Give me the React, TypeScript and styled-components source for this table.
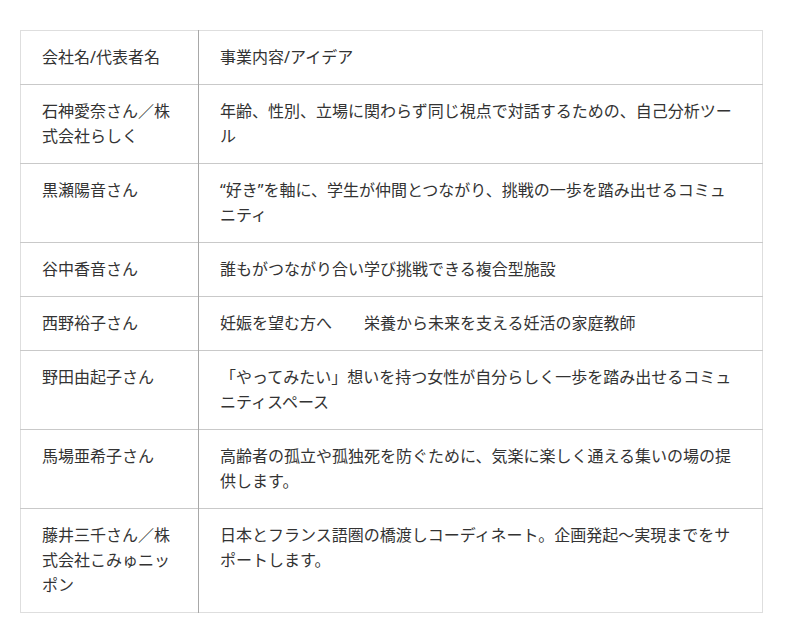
import styled, { createGlobalStyle } from "styled-components";

const GlobalStyle = createGlobalStyle`
  body {
    margin: 0;
    background: #fff;
    font-family: "Noto Sans", "Noto Sans CJK JP", sans-serif;
    color: #333;
  }
`;

const Wrap = styled.div`
  padding: 30px 0 0 20px;
`;

const Table = styled.table`
  width: 743px;
  border-collapse: collapse;
  border: 1px solid #dedede;
  table-layout: fixed;
`;

const Row = styled.tr`
  border-top: 1px solid #c9c9c9;
  &:first-child {
    border-top-color: #dedede;
  }
`;

const Cell = styled.td<{ $name?: boolean }>`
  width: ${(p) => (p.$name ? "135px" : "auto")};
  padding: 14px 21px;
  font-size: 16px;
  line-height: 25px;
  vertical-align: top;
  color: #333;
  border-right: ${(p) => (p.$name ? "1px solid #a8a8a8" : "none")};
  word-break: break-all;
`;

const rows: [string, string][] = [
  ["会社名/代表者名", "事業内容/アイデア"],
  ["石神愛奈さん／株式会社らしく", "年齢、性別、立場に関わらず同じ視点で対話するための、自己分析ツール"],
  ["黒瀬陽音さん", "“好き”を軸に、学生が仲間とつながり、挑戦の一歩を踏み出せるコミュニティ"],
  ["谷中香音さん", "誰もがつながり合い学び挑戦できる複合型施設"],
  ["西野裕子さん", "妊娠を望む方へ　　栄養から未来を支える妊活の家庭教師"],
  ["野田由起子さん", "「やってみたい」想いを持つ女性が自分らしく一歩を踏み出せるコミュニティスペース"],
  ["馬場亜希子さん", "高齢者の孤立や孤独死を防ぐために、気楽に楽しく通える集いの場の提供します。"],
  ["藤井三千さん／株式会社こみゅニッポン", "日本とフランス語圏の橋渡しコーディネート。企画発起〜実現までをサポートします。"],
];

export default function App(): JSX.Element {
  return (
    <Wrap>
      <GlobalStyle />
      <Table>
        <tbody>
          {rows.map(([name, idea]) => (
            <Row key={name}>
              <Cell $name>{name}</Cell>
              <Cell>{idea}</Cell>
            </Row>
          ))}
        </tbody>
      </Table>
    </Wrap>
  );
}
